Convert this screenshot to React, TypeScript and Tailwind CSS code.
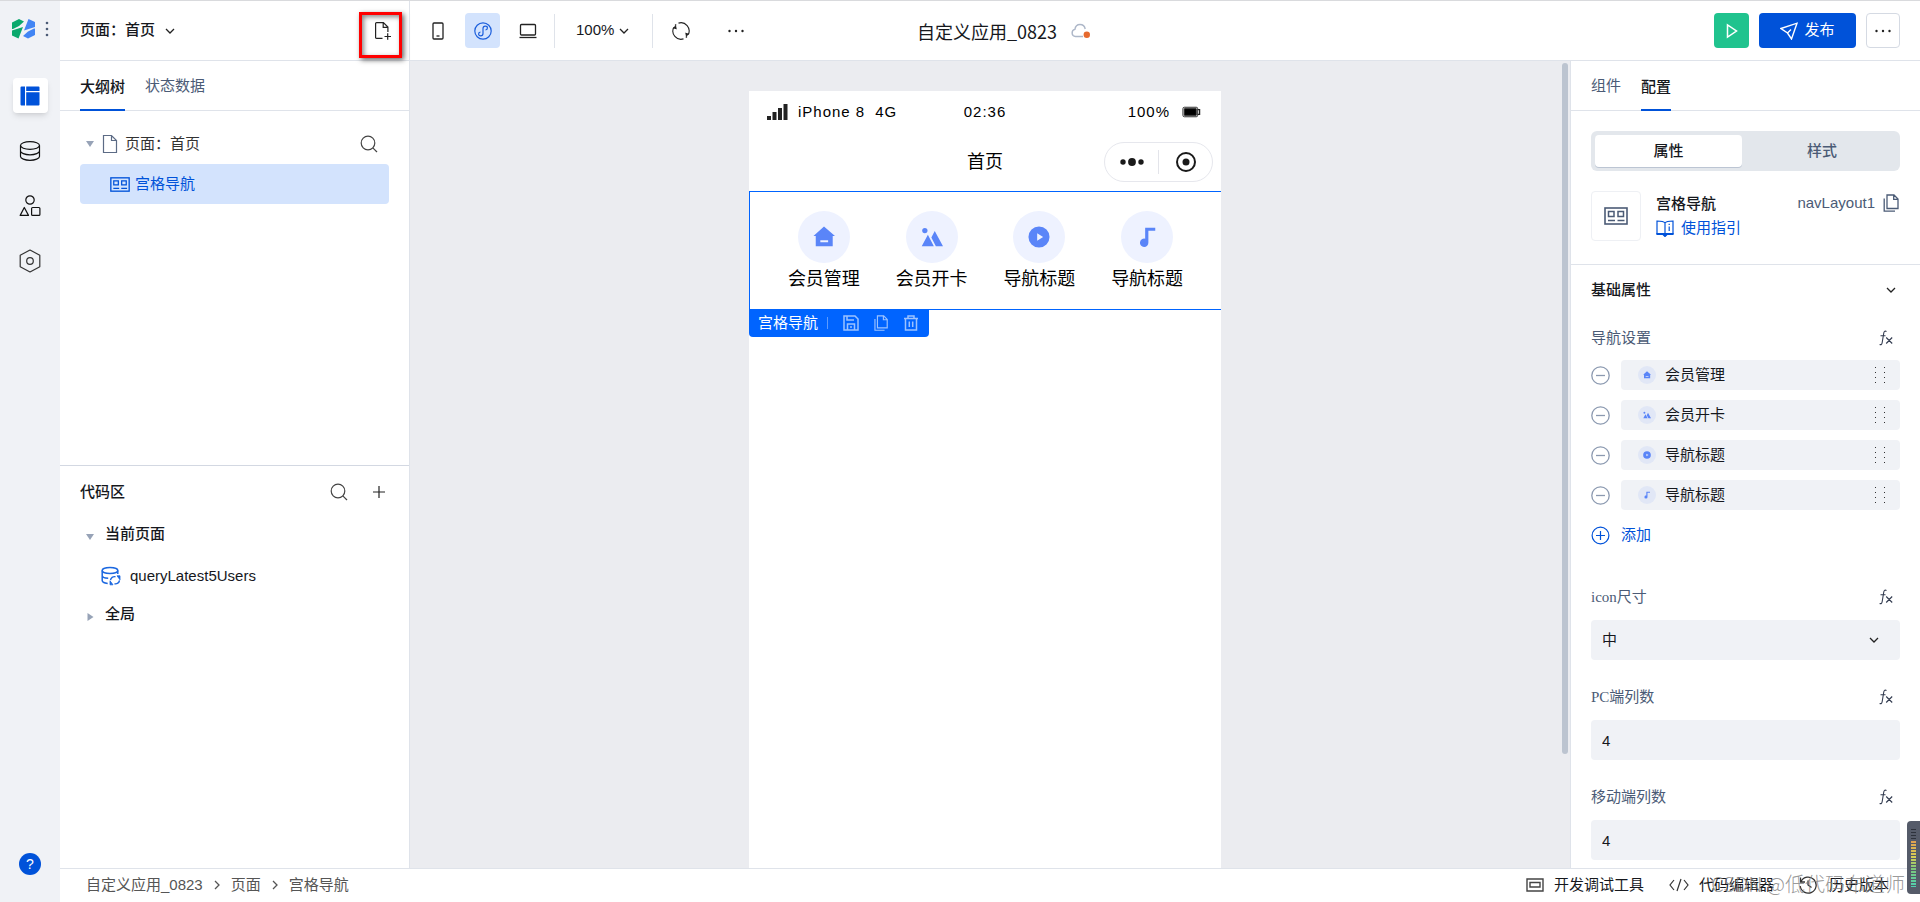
import React, { useState } from 'react';

type IconName = 'home' | 'image' | 'play' | 'music';

interface NavItem {
  id: number;
  title: string;
  icon: IconName;
}

const NAV_ITEMS: NavItem[] = [
  { id: 1, title: '会员管理', icon: 'home' },
  { id: 2, title: '会员开卡', icon: 'image' },
  { id: 3, title: '导航标题', icon: 'play' },
  { id: 4, title: '导航标题', icon: 'music' },
];

interface IconProps {
  className?: string;
}

const NavGlyph = ({ name, className }: { name: IconName; className?: string }) => (
  <svg viewBox="0 0 24 24" className={className} fill="#5a85f8" aria-hidden="true">
    {name === 'home' && (
      <path fillRule="evenodd" d="M12 .5 24 11h-2.500v11h-18.500V11H.5zM8 15.500v2.200h8.500v-2.200z" />
    )}
    {name === 'image' && (
      <>
        <circle cx="4.200" cy="5" r="2.900" />
        <path d="M7.500 9.500 14 22H.8zM15 5.500 24 22h-7.800L11.300 12.500z" />
      </>
    )}
    {name === 'play' && <path fillRule="evenodd" d="M12 .5a11.500 11.500 0 1 0 0 23 11.500 11.500 0 0 0 0-23zM10 8v8l6.500-4z" />}
    {name === 'music' && <path d="M10 2h11v3.200h-7.500V18a4.600 4.600 0 1 1-3.500-4.200z" />}
  </svg>
);

const LogoIcon = () => (
  <svg viewBox="0 0 24 20" className="h-5 w-6" aria-hidden="true">
    <path d="M0 3.500 7 0l5 2.500L7 7l-6 3H0zM0 11.500 11 8 6.500 19.500 0 16.500z" fill="#0aa86c" />
    <path d="M23 16l-7 3.500-5-2.500 5-4.500 6-3h1zM23 8l-11 3.500L16.500 0 23 3z" fill="#4285f4" />
  </svg>
);

const LayoutIcon = () => (
  <svg viewBox="0 0 20 20" className="size-5" fill="#0052d9" aria-hidden="true">
    <path d="M1.500.5H5v19H1.500A1 1 0 0 1 .5 18.500v-17a1 1 0 0 1 1-1zM6.200.5h12.300a1 1 0 0 1 1 1V5H6.200zM6.200 6.300h13.300v12.200a1 1 0 0 1-1 1H6.200z" />
  </svg>
);

const DatabaseIcon = () => (
  <svg viewBox="0 0 22 20" className="h-5 w-[22px]" fill="none" stroke="#111" strokeWidth="1.200" aria-hidden="true">
    <ellipse cx="11" cy="4.500" rx="9.500" ry="3.800" />
    <path d="M1.500 4.500v11c0 2 4.300 3.800 9.500 3.800s9.500-1.800 9.500-3.800v-11M1.500 10c0 2 4.300 3.800 9.500 3.800s9.500-1.800 9.500-3.800" />
  </svg>
);

const ShapesIcon = () => (
  <svg viewBox="0 0 22 22" className="size-[22px]" fill="none" stroke="#111" strokeWidth="1.200" strokeLinejoin="round" aria-hidden="true">
    <circle cx="11" cy="5" r="4.200" />
    <path d="M5.300 12.500 9.500 20.400H1.200z" />
    <rect x="12.600" y="12.500" width="8.300" height="7.900" rx="1" />
  </svg>
);

const HexIcon = () => (
  <svg viewBox="0 0 22 24" className="h-6 w-[22px]" fill="none" stroke="#333" strokeWidth="1.200" strokeLinejoin="round" aria-hidden="true">
    <path d="M11 1 20.800 6.300v11.400L11 23 1.200 17.700V6.300z" />
    <circle cx="11" cy="12" r="3.300" />
  </svg>
);

const SearchIcon = () => (
  <svg viewBox="0 0 18 18" className="size-[18px]" fill="none" stroke="#444" strokeWidth="1.200" aria-hidden="true">
    <circle cx="8" cy="8" r="6.800" />
    <path d="m12.800 12.800 4.200 4.200" />
  </svg>
);

const Chevron = ({ className = 'h-2 w-3' }: IconProps) => (
  <svg viewBox="0 0 12 8" className={className} fill="none" stroke="#222" strokeWidth="1.300" aria-hidden="true">
    <path d="m2 2 4 4 4-4" />
  </svg>
);

const FileIcon = () => (
  <svg viewBox="0 0 16 20" className="h-5 w-4" fill="none" stroke="#5c6b85" strokeWidth="1.200" aria-hidden="true">
    <path d="M1.500 1.500h8l5 5v12h-13zM9.500 1.500v5h5" />
  </svg>
);

const FilePlusIcon = () => (
  <svg viewBox="0 0 18 20" className="h-5 w-[18px]" fill="none" stroke="#222" strokeWidth="1.200" aria-hidden="true">
    <path d="M8.500 17.400H2.600q-1 0-1-1V2.600q0-1 1-1h6.800l4.500 4.500v5M9.200 1.600v4.700h4.700M10.500 15.500h6.500M13.700 12.300v6.500" />
  </svg>
);

const GridNavIcon = ({ className }: IconProps) => (
  <svg viewBox="0 0 24 18" fill="none" stroke="currentColor" className={className} aria-hidden="true">
    <rect x="1" y="1" width="22" height="16" strokeWidth="1.600" />
    <path d="M4.500 4.500h5.500v5H4.500zM14 4.500h5.500v5H14zM4 13.500h7M13.500 13.500h7" strokeWidth="1.500" />
  </svg>
);

const CopyIcon = ({ className }: IconProps) => (
  <svg viewBox="0 0 16 18" fill="none" stroke="currentColor" strokeWidth="1.300" className={className} aria-hidden="true">
    <path d="M4 1h7l4 4v9.500H4zM10.700 1v4.300H15M1.200 4.500v12.700H12" />
  </svg>
);

const FxIcon = () => (
  <svg viewBox="0 0 14 16" className="h-4 w-3.5" fill="none" stroke="#333c50" strokeWidth="1.100" aria-hidden="true">
    <path d="M7.500 1.400C5.500.4 4.900 1.800 4.600 4L3.200 12.500C2.900 14.500 2 15 .6 14.400M1.500 5.800h5M7.200 7.500l6 6M13.200 7.500l-6 6" />
  </svg>
);

const Dots = () => (
  <svg viewBox="0 0 18 4" className="h-1 w-[18px]" fill="#222" aria-hidden="true">
    <circle cx="2.500" cy="2" r="1.200" />
    <circle cx="9" cy="2" r="1.200" />
    <circle cx="15.500" cy="2" r="1.200" />
  </svg>
);

const Triangle = ({ open }: { open: boolean }) => (
  <svg viewBox="0 0 8 8" className="size-2" fill="#97a3b7" aria-hidden="true">
    <path d={open ? 'M0 1h8L4 7z' : 'M1.500 0v8l6-4z'} />
  </svg>
);

const FieldLabel = ({ htmlFor, children }: { htmlFor?: string; children: React.ReactNode }) => (
  <div className="flex h-5 items-center justify-between pr-[7px]">
    <label htmlFor={htmlFor} className="font-['Liberation_Serif','Noto_Sans_CJK_SC',serif] text-[#4b5b76]">
      {children}
    </label>
    <button type="button" aria-label="fx">
      <FxIcon />
    </button>
  </div>
);

const SideBar = () => (
  <aside className="flex w-15 shrink-0 flex-col items-center bg-[#f0f2f6]">
    <div className="flex h-14 w-full items-center gap-[9px] pl-3">
      <LogoIcon />
      <svg viewBox="0 0 4 16" className="h-4 w-1" fill="#4b5b76" aria-hidden="true">
        <circle cx="2" cy="2" r="1.300" />
        <circle cx="2" cy="8" r="1.300" />
        <circle cx="2" cy="14" r="1.300" />
      </svg>
    </div>
    <nav className="mt-[21px] flex w-full flex-col items-center gap-5">
      <button type="button" aria-label="layout" className="flex size-[35px] items-center justify-center rounded bg-white shadow-md">
        <LayoutIcon />
      </button>
      <button type="button" aria-label="data" className="flex size-[35px] items-center justify-center">
        <DatabaseIcon />
      </button>
      <button type="button" aria-label="materials" className="flex size-[35px] items-center justify-center">
        <ShapesIcon />
      </button>
      <button type="button" aria-label="settings" className="flex size-[35px] items-center justify-center">
        <HexIcon />
      </button>
    </nav>
    <button type="button" className="mt-auto mb-[27px] size-[22px] rounded-full bg-[#0052d9] text-sm text-white">
      ?
    </button>
  </aside>
);

const TopBar = () => (
  <header className="flex h-[60px] shrink-0 border-b border-[#dfe3ea] pr-5">
    <div className="flex flex-1">
      <div className="flex w-[350px] shrink-0 items-center justify-between border-r border-[#dfe3ea] pr-[7px] pl-5">
        <button type="button" className="flex items-center gap-[9px] font-medium">
          页面：首页
          <Chevron />
        </button>
        {/* highlighted "new page" button */}
        <button
          type="button"
          aria-label="new page"
          className="mt-2 flex h-[46px] w-[43px] items-center justify-center border-3 border-[#ff0000] pb-2 pl-1 shadow-[2px_2px_5px_#666,inset_2px_2px_5px_#888]"
        >
          <FilePlusIcon />
        </button>
      </div>
      <div className="flex items-center pl-2.5">
        <button type="button" aria-label="phone" className="flex size-[35px] items-center justify-center">
          <svg viewBox="0 0 12 18" className="h-[18px] w-3" fill="none" stroke="#222" strokeWidth="1.300">
            <rect x="1" y="1" width="10" height="16" rx="1" />
            <path d="M4.500 14h3" />
          </svg>
        </button>
        <button type="button" aria-label="mini program" className="ml-2.5 flex size-[35px] items-center justify-center rounded bg-[#d3e3fd]">
          <svg viewBox="0 0 18 18" className="size-[18px]" fill="none" stroke="#1c5fdc" strokeWidth="1.200">
            <circle cx="9" cy="9" r="8.200" />
            <path d="M9 11.500v-5c0-1.500 1-2.300 2.300-2.300 1.200 0 2.100.7 2.100 1.800s-.7 1.800-1.900 2M9 6.500v5c0 1.500-1 2.300-2.300 2.300-1.200 0-2.100-.7-2.100-1.800s.7-1.800 1.900-2" />
          </svg>
        </button>
        <button type="button" aria-label="desktop" className="ml-2.5 flex size-[35px] items-center justify-center">
          <svg viewBox="0 0 18 16" className="h-4 w-[18px]" fill="none" stroke="#222" strokeWidth="1.300">
            <rect x="1.500" y="1.500" width="15" height="10.500" rx="1" />
            <path d="M.5 14.500h17" />
          </svg>
        </button>
        <span className="ml-[9px] h-[34px] w-px bg-[#dfe3ea]" />
        <button type="button" className="ml-[21px] flex items-center gap-1">
          100%
          <Chevron />
        </button>
        <span className="ml-[22px] h-[34px] w-px bg-[#dfe3ea]" />
        <button type="button" aria-label="refresh" className="ml-[19px]">
          <svg viewBox="0 0 18 18" className="size-[18px]" fill="none" stroke="#222" strokeWidth="1.100">
            <path d="M6.500 1.100A8.200 8.200 0 0 1 16.300 12.500M11.500 16.900A8.200 8.200 0 0 1 1.700 5.500M3 3.500l1.200-1M15 14.500l-1.200 1" />
            <path d="m.8 6.200 3-2.700.7 3.800M17.200 11.800l-3 2.700-.7-3.800" fill="#222" strokeWidth=".4" />
          </svg>
        </button>
        <button type="button" aria-label="more" className="ml-[37px]">
          <Dots />
        </button>
      </div>
    </div>
    <h1 className="flex items-center gap-3.5 pl-12 font-['Noto_Sans_CJK_SC',sans-serif] text-lg">
      自定义应用_0823
      <svg viewBox="0 0 20 16" className="h-4 w-5" fill="none" aria-hidden="true">
        <path d="M12 13.500H4.500a3.600 3.600 0 0 1-.6-7.100C4.300 3.500 6.300 1.500 9 1.500s4.700 1.800 5.200 4.500" stroke="#adb7c8" strokeWidth="1.400" />
        <circle cx="15.800" cy="11.800" r="3.200" fill="#e66a2e" />
      </svg>
    </h1>
    <div className="flex flex-1 items-center justify-end gap-2.5">
      <button type="button" aria-label="run" className="flex size-[35px] items-center justify-center rounded bg-[#20c38e]">
        <svg viewBox="0 0 12 16" className="h-4 w-3" fill="none" stroke="#fff" strokeWidth="1.500">
          <path d="M1.500 2v12l9-6z" />
        </svg>
      </button>
      <button type="button" className="flex h-[35px] w-[97px] items-center justify-center gap-1.5 rounded bg-[#0052d9] text-white">
        <svg viewBox="0 0 18 18" className="size-[18px]" fill="none" stroke="#fff" strokeWidth="1.400">
          <path d="M1 6.500 17 1.200 11.500 17 7.500 11zM7.500 11l3.500-3.500" />
        </svg>
        发布
      </button>
      <button type="button" aria-label="more actions" className="flex h-[35px] w-[34px] items-center justify-center rounded border border-[#d5dae3]">
        <Dots />
      </button>
    </div>
  </header>
);

const OutlinePanel = () => (
  <section className="flex w-[350px] shrink-0 flex-col border-r border-[#dfe3ea]">
    <div className="flex h-[405px] flex-col border-b border-[#d3d8e2]">
      <div className="flex h-[50px] gap-5 border-b border-[#dfe3ea] px-5">
        <button type="button" className="-mb-px border-b-2 border-[#0052d9] pt-1 font-medium">大纲树</button>
        <button type="button" className="pt-0.5 text-[#4b5b76]">状态数据</button>
      </div>
      <div className="px-5 pt-[13px]">
        <div className="flex h-10 items-center pr-[11px] pl-1.5">
          <Triangle open />
          <span className="mr-[7px] ml-2"><FileIcon /></span>
          <span className="flex-1 text-[#333]">页面：首页</span>
          <button type="button" aria-label="search outline"><SearchIcon /></button>
        </div>
        <button type="button" className="flex h-10 w-full items-center gap-[5px] rounded bg-[#d3e3fd] pl-[30px] text-[#0052d9]">
          <GridNavIcon className="h-[15px] w-5" />
          宫格导航
        </button>
      </div>
    </div>
    <div className="flex-1 px-5">
      <div className="flex h-[52px] items-center pr-1">
        <h2 className="flex-1 font-medium">代码区</h2>
        <button type="button" aria-label="search code"><SearchIcon /></button>
        <button type="button" aria-label="add code" className="ml-[25px]">
          <svg viewBox="0 0 12 12" className="size-3" stroke="#222" strokeWidth="1.200">
            <path d="M0 6h12M6 0v12" />
          </svg>
        </button>
      </div>
      <div className="flex h-8 items-center gap-[11px] pl-1.5 font-medium">
        <span className="pt-1.5"><Triangle open /></span>
        当前页面
      </div>
      <div className="flex h-[52px] items-center gap-[9px] pl-[21px]">
        <svg viewBox="0 0 20 20" className="size-5" fill="none" stroke="#1c68e0" strokeWidth="1.500">
          <ellipse cx="9" cy="4.500" rx="7.800" ry="3" />
          <path d="M1.200 4.500v10c0 1.500 2.500 2.600 5.500 3M16.800 4.500V8M1.200 9.500c0 1.500 2.500 2.600 6 2.800" />
          <path d="M9.500 14.200c.3-2.500 2.500-4 5-3.400M18.500 14.300c-.3 2.500-2.500 4-5 3.400" strokeWidth="1.400" />
          <path d="M16 9.800h3v4zM12 18.800H9v-4z" fill="#1c68e0" strokeWidth=".8" />
        </svg>
        queryLatest5Users
      </div>
      <div className="flex h-6 items-center gap-[11px] pl-1.5 font-medium">
        <span className="pt-1.5"><Triangle open={false} /></span>
        全局
      </div>
    </div>
  </section>
);

const PhonePreview = () => (
  <div className="flex w-[472px] flex-col bg-white">
    <div className="relative flex h-[42px] items-center justify-between pr-5 pl-[18px] tracking-[1px] text-black">
      <div className="flex items-center gap-2.5">
        <svg viewBox="0 0 21 16" className="h-4 w-[21px]" fill="#222">
          <path d="M0 12h4v4H0zM5.500 8h4v8h-4zM11 4h4v12h-4zM16.500 0h4v16h-4z" />
        </svg>
        <span>iPhone 8</span>
        <span>4G</span>
      </div>
      <span className="absolute left-1/2 -translate-x-1/2">02:36</span>
      <div className="flex items-center gap-3">
        100%
        <svg viewBox="0 0 20 12" className="h-3 w-[19px]" fill="none" stroke="#222">
          <rect x="1" y="1" width="15.500" height="10" rx="1.500" />
          <path d="M2.500 2.500h12.500v7H2.500z" fill="#000" />
          <path d="M16.500 3.500h2v5h-2" strokeWidth="1.400" />
        </svg>
      </div>
    </div>
    <div className="relative flex h-[58px] items-center justify-center text-lg text-black">
      首页
      <div className="absolute right-2 flex h-10 w-[109px] items-center rounded-full border border-[#e6e7ed]">
        <button type="button" aria-label="menu" className="flex flex-1 justify-center">
          <svg viewBox="0 0 24 8" className="h-2 w-6" fill="#1a1a1a">
            <circle cx="3" cy="4" r="2.700" />
            <circle cx="12" cy="4" r="3.900" />
            <circle cx="21" cy="4" r="2.700" />
          </svg>
        </button>
        <span className="h-6 w-px bg-[#e3e4ea]" />
        <button type="button" aria-label="close" className="flex flex-1 justify-center">
          <svg viewBox="0 0 20 20" className="size-5" fill="none" stroke="#1a1a1a" strokeWidth="2">
            <circle cx="10" cy="10" r="9" />
            <circle cx="10" cy="10" r="3.500" fill="#1a1a1a" stroke="none" />
          </svg>
        </button>
      </div>
    </div>
    <div className="relative grid h-[119px] grid-cols-4 border border-r-0 border-[#0064ff] px-5 pt-[19px]">
      {NAV_ITEMS.map((item) => (
        <div key={item.id} className="flex flex-col items-center text-lg text-black">
          <span className="flex size-[52px] items-center justify-center rounded-full bg-[#eef2ff]">
            <NavGlyph name={item.icon} className="size-[22px]" />
          </span>
          <span className="mt-0.5 leading-7">{item.title}</span>
        </div>
      ))}
      <div className="absolute top-full -left-px flex h-7 w-[180px] items-center rounded-b bg-[#0064ff] pl-[9px] text-white">
        宫格导航
        <span className="mr-[15px] ml-[9px] h-3 w-px bg-[#5c9bff]" />
        <div className="flex items-center gap-3.5 text-[#9cc2ff]">
          <button type="button" aria-label="save">
            <svg viewBox="0 0 16 16" className="size-4" fill="none" stroke="currentColor" strokeWidth="1.500">
              <path d="M1 1h11l3 3v11H1zM4 1v4h7M4.500 15V9h7v6M7 12h2" />
            </svg>
          </button>
          <button type="button" aria-label="copy"><CopyIcon className="size-4" /></button>
          <button type="button" aria-label="delete">
            <svg viewBox="0 0 16 16" className="size-4" fill="none" stroke="currentColor" strokeWidth="1.500">
              <path d="M1 3.500h14M5 3V1h6v2M2.500 3.500V15h11V3.500M6.300 6.500v5.500M9.700 6.500v5.500" />
            </svg>
          </button>
        </div>
      </div>
    </div>
  </div>
);

const ConfigPanel = () => {
  const [iconSize, setIconSize] = useState('中');
  const [pcColumns, setPcColumns] = useState('4');
  const [mobileColumns, setMobileColumns] = useState('4');

  return (
    <section className="w-[350px] shrink-0 overflow-hidden border-l border-[#dfe3ea]">
      <div className="flex h-[50px] gap-5 border-b border-[#dfe3ea] px-5">
        <button type="button" className="pt-0.5 text-[#4b5b76]">组件</button>
        <button type="button" className="-mb-px border-b-2 border-[#0052d9] pt-1 font-medium">配置</button>
      </div>
      <div className="border-b border-[#dfe3ea] px-5 pt-5 pb-[23px]">
        <div className="flex h-10 rounded-md bg-[#e3e7ec] p-1">
          <button type="button" className="w-[147px] rounded-sm bg-white font-medium shadow-[0_1px_0_#bcc5d3]">属性</button>
          <button type="button" className="flex-1 pl-1.5 font-medium text-[#4b5b76]">样式</button>
        </div>
        <div className="mt-5 flex h-[50px]">
          <div className="flex size-[50px] items-center justify-center rounded border border-[#eef0f4] text-[#4b5b76]">
            <GridNavIcon className="h-[18px] w-6" />
          </div>
          <div className="ml-[15px] flex-1">
            <h3 className="leading-[25px] font-medium">宫格导航</h3>
            <a href="#guide" className="flex items-center gap-[7px] leading-6 text-[#0052d9]">
              <svg viewBox="0 0 18 17" className="h-[17px] w-[18px]" fill="none" stroke="#0052d9" strokeWidth="1.200">
                <path d="M9 3v11.500M9 3C8 1.500 6.500 1 1 1v12.500h6L9 15.500l2-2h6V1c-5.500 0-7 .5-8 2M13.200 6.500V11M13.200 3.800v1.200" />
                <path d="M1 13.500h16v1H11l-2 2-2-2H1z" fill="#0052d9" />
              </svg>
              使用指引
            </a>
          </div>
          <button type="button" className="flex h-6 items-center gap-2 pr-px text-[#4b5b76]">
            navLayout1
            <CopyIcon className="h-[18px] w-4" />
          </button>
        </div>
      </div>
      <div className="px-5">
        <button type="button" className="flex h-[50px] w-full items-center justify-between pr-[3px] font-medium">
          基础属性
          <Chevron />
        </button>
        <div className="mt-[13px]">
          <FieldLabel>导航设置</FieldLabel>
          <ul className="mt-3 flex flex-col gap-2.5">
            {NAV_ITEMS.map((item) => (
              <li key={item.id} className="flex h-[30px] items-center gap-[11px]">
                <button type="button" aria-label="remove">
                  <svg viewBox="0 0 19 19" className="size-[19px]" fill="none" stroke="#8b99b0" strokeWidth="1.300">
                    <circle cx="9.500" cy="9.500" r="8.700" />
                    <path d="M5 9.500h9" />
                  </svg>
                </button>
                <div className="flex h-full flex-1 items-center gap-[9px] rounded bg-[#f0f2f6] pr-3.5 pl-[17px]">
                  <span className="flex size-[18px] items-center justify-center rounded-full bg-[#e1e7f6]">
                    <NavGlyph name={item.icon} className="size-2" />
                  </span>
                  <span className="flex-1">{item.title}</span>
                  <svg viewBox="0 0 12 18" className="h-[18px] w-3" fill="#333">
                    <path d="M1 1h1v1H1zM10 1h1v1h-1zM1 6h1v1H1zM10 6h1v1h-1zM1 11h1v1H1zM10 11h1v1h-1zM1 16h1v1H1zM10 16h1v1h-1z" />
                  </svg>
                </div>
              </li>
            ))}
          </ul>
          <button type="button" className="mt-2.5 flex h-[30px] items-center gap-[11px] text-[#0052d9]">
            <svg viewBox="0 0 19 19" className="size-[19px]" fill="none" stroke="#0052d9" strokeWidth="1.200">
              <circle cx="9.500" cy="9.500" r="8.400" />
              <path d="M5 9.500h9M9.500 5v9" />
            </svg>
            添加
          </button>
        </div>
        <div className="mt-[37px]">
          <FieldLabel htmlFor="icon-size">icon尺寸</FieldLabel>
          <div className="relative mt-[13px] flex h-10 items-center rounded bg-[#f0f2f6]">
            <select
              id="icon-size"
              value={iconSize}
              onChange={(e) => setIconSize(e.target.value)}
              className="h-full w-full appearance-none bg-transparent px-[11px] outline-none"
            >
              <option>小</option>
              <option>中</option>
              <option>大</option>
            </select>
            <Chevron className="pointer-events-none absolute right-5 h-2 w-3" />
          </div>
        </div>
        <div className="mt-[27px]">
          <FieldLabel htmlFor="pc-columns">PC端列数</FieldLabel>
          <input
            id="pc-columns"
            value={pcColumns}
            onChange={(e) => setPcColumns(e.target.value)}
            className="mt-[13px] h-10 w-full rounded bg-[#f0f2f6] px-[11px] outline-none"
          />
        </div>
        <div className="mt-[27px]">
          <FieldLabel htmlFor="mobile-columns">移动端列数</FieldLabel>
          <input
            id="mobile-columns"
            value={mobileColumns}
            onChange={(e) => setMobileColumns(e.target.value)}
            className="mt-[13px] h-10 w-full rounded bg-[#f0f2f6] px-[11px] outline-none"
          />
        </div>
      </div>
    </section>
  );
};

const BreadcrumbArrow = () => (
  <svg viewBox="0 0 6 10" className="h-2.5 w-1.5" fill="none" stroke="#555" strokeWidth="1.300" aria-hidden="true">
    <path d="m1 1 4 4-4 4" />
  </svg>
);

const StatusBar = () => (
  <footer className="flex h-[34px] shrink-0 items-center justify-between border-t border-[#dfe3ea] pr-[31px] pb-px pl-[26px]">
    <nav className="flex items-center gap-[11px] text-[#555]">
      <a href="#app">自定义应用_0823</a>
      <BreadcrumbArrow />
      <a href="#page">页面</a>
      <BreadcrumbArrow />
      <a href="#nav">宫格导航</a>
    </nav>
    <div className="flex items-center gap-[25px]">
      <button type="button" className="flex items-center gap-2.5">
        <svg viewBox="0 0 18 14" className="h-3.5 w-[18px]" fill="none" stroke="#444" strokeWidth="1.400">
          <path d="M1 1h16v12H1zM4 4.500h10v4.500H4z" />
        </svg>
        开发调试工具
      </button>
      <button type="button" className="flex items-center gap-2.5">
        <svg viewBox="0 0 20 14" className="h-3.5 w-5" fill="none" stroke="#333" strokeWidth="1.200">
          <path d="M5 2 1 7l4 5M15 2l4 5-4 5M12 1 8 13" />
        </svg>
        代码编辑器
      </button>
      <button type="button" className="flex items-center gap-3">
        <svg viewBox="0 0 18 18" className="size-[18px]" fill="none" stroke="#333" strokeWidth="1.300">
          <path d="M2 5.500A8 8 0 1 1 1.200 10M1.500 1.500v4.500H6M9 4.500V9l3.500 2.500" />
        </svg>
        历史版本
      </button>
    </div>
  </footer>
);

// floating level gauge on the right edge
const LevelMeter = () => (
  <div className="absolute right-0 bottom-2 h-[73px] w-[13px] rounded-l bg-[#555b69] pt-2 pl-1">
    <div className="h-3 w-[5px] bg-[repeating-linear-gradient(#2d323c_0_1px,#555b69_1px_3px)]" />
    <div className="h-[46px] w-[5px] bg-[repeating-linear-gradient(transparent_0_2px,#555b69_2px_3px),linear-gradient(#e0a050,#d6cf55_35%,#7ec87a_60%,#4fd0b0)]" />
  </div>
);

export default function App() {
  return (
    <div className="relative flex h-screen overflow-hidden border-t border-[#d9dadd] bg-white font-['Liberation_Sans','Noto_Sans_CJK_SC',sans-serif] text-[15px] text-[#16181d]">
      <SideBar />
      <div className="flex min-w-0 flex-1 flex-col">
        <TopBar />
        <div className="flex min-h-0 flex-1">
          <OutlinePanel />
          <main className="relative flex flex-1 justify-center bg-[#ebecf0] pt-[30px] pr-2.5">
            <PhonePreview />
            <div className="absolute top-0.5 right-0.5 h-[691px] w-1.5 rounded-full bg-[#bcc4d0]" />
          </main>
          <ConfigPanel />
        </div>
        <StatusBar />
      </div>
      <div className="pointer-events-none absolute right-[15px] bottom-1 font-['Noto_Sans_CJK_SC',sans-serif] text-xl leading-7 font-light text-[#808080]/80">
        CSDN @低代码布道师
      </div>
      <LevelMeter />
    </div>
  );
}
